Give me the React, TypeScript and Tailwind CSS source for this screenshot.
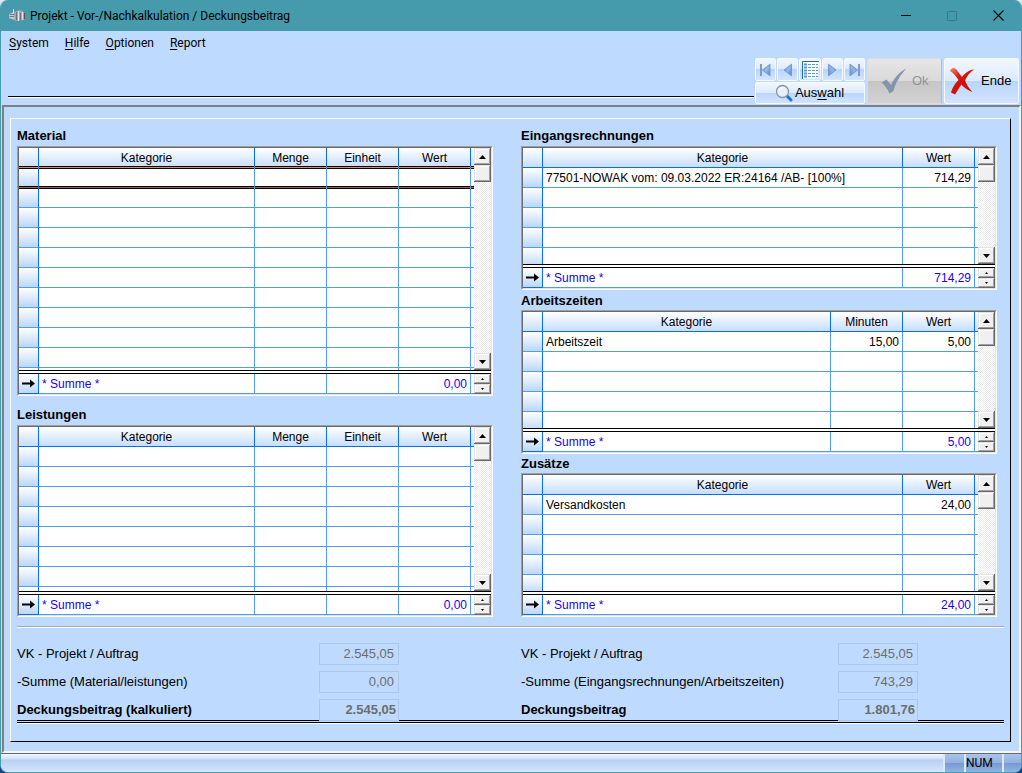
import React from "react";

type Column = { title: string; sum?: string };

type GridProps = {
  title: string;
  columns: Column[];
  rows: string[][];
  rowCount: number;
  bodyClass: string;
  headingClass: string;
  focused?: boolean;
};

const ARIAL = "font-['Liberation_Sans',Arial,sans-serif]";
const UI = "font-['Roboto','Segoe_UI',sans-serif]";

const BEVEL =
  "bg-[#f0f0f0] shadow-[inset_-1px_-1px_#696969,inset_1px_1px_#e3e3e3,inset_-2px_-2px_#a0a0a0,inset_2px_2px_#ffffff]";

const GLOSS =
  "rounded-xs border border-[#f4f9ff] bg-[linear-gradient(#f2f7ff_0%,#dbe9fe_50%,#b9d5fc_50%,#d2e4fe_100%)]";

function Arrow({ up, small }: { up?: boolean; small?: boolean }) {
  const w = small ? 3 : 7;
  const h = small ? 2 : 4;
  const mid = w / 2;
  return (
    <svg width={w} height={h} viewBox={`0 0 ${w} ${h}`} aria-hidden="true">
      <path d={up ? `M0 ${h}L${mid} 0L${w} ${h}Z` : `M0 0H${w}L${mid} ${h}Z`} fill="#000" />
    </svg>
  );
}

function ColGroup({ columns }: { columns: Column[] }) {
  return (
    <colgroup>
      <col className="w-5" />
      {columns.map((c, i) => (
        <col key={c.title} className={i === 0 ? "" : "w-[72px]"} />
      ))}
      <col className="w-[3px]" />
    </colgroup>
  );
}

function GridPanel({ title, columns, rows, rowCount, bodyClass, headingClass, focused }: GridProps) {
  const headFocus = focused
    ? "border-b-[#f08c14] shadow-[inset_0_-1px_#000000]"
    : "border-b-[#0a6cf0]";
  const rowLine = (r: number) => {
    if (focused && r === 0)
      return "border-b-[#a8621a] shadow-[inset_0_1px_#000000,inset_0_-1px_#000000]";
    if (focused && r === 1) return "border-b-[#4e9bf8] shadow-[inset_0_1px_#000000]";
    return "border-b-[#4e9bf8]";
  };
  return (
    <section>
      <h2 className={`text-[13px] leading-[18px] font-bold ${headingClass}`}>{title}</h2>
      <div className="border border-t-[#a0a0a0] border-r-white border-b-white border-l-[#a0a0a0]">
        <div className="border border-t-[#696969] border-r-[#e3e3e3] border-b-[#e3e3e3] border-l-[#696969] bg-white text-xs leading-4">
          <div className={`flex overflow-hidden ${bodyClass}`}>
            <div className="min-w-0 flex-1">
              <table className="w-full table-fixed border-separate border-spacing-0" aria-label={title}>
                <ColGroup columns={columns} />
                <thead>
                  <tr className="h-5 bg-linear-to-b from-white to-[#c4dcfc]">
                    <th className={`h-5 border-r border-b border-r-[#0a6cf0] p-0 ${headFocus}`} />
                    {columns.map((c) => (
                      <th
                        key={c.title}
                        scope="col"
                        className={`h-5 border-r border-b border-r-[#0a6cf0] p-0 text-center font-normal ${headFocus}`}
                      >
                        {c.title}
                      </th>
                    ))}
                    <th className={`h-5 border-b p-0 ${headFocus}`} />
                  </tr>
                </thead>
                <tbody>
                  {Array.from({ length: rowCount }, (_, r) => (
                    <tr key={r}>
                      <td
                        className={`h-5 border-r border-b border-r-[#0a6cf0] bg-linear-to-b from-white to-[#bcd7fb] p-0 ${rowLine(r)}`}
                      />
                      {columns.map((c, i) => (
                        <td
                          key={c.title}
                          className={`h-5 overflow-hidden border-r border-b border-r-[#4e9bf8] px-[3px] py-0 whitespace-nowrap ${
                            i === 0 ? "text-left" : "text-right"
                          } ${rowLine(r)}`}
                        >
                          {rows[r]?.[i] ?? ""}
                        </td>
                      ))}
                      <td className={`h-5 border-b p-0 ${rowLine(r)}`} />
                    </tr>
                  ))}
                </tbody>
              </table>
            </div>
            <div className="flex w-[17px] flex-col bg-[repeating-conic-gradient(#ffffff_0%_25%,#ebebeb_0%_50%)] bg-size-[2px_2px]">
              <button
                type="button"
                aria-label={`${title}: nach oben`}
                className={`flex h-[17px] items-center justify-center ${BEVEL}`}
              >
                <Arrow up />
              </button>
              <div className={`h-[17px] ${BEVEL}`} />
              <div className="flex-1" />
              <button
                type="button"
                aria-label={`${title}: nach unten`}
                className={`flex h-[17px] items-center justify-center ${BEVEL}`}
              >
                <Arrow />
              </button>
            </div>
          </div>
          <div className="h-1 border-y border-black bg-white" />
          <div className="flex">
            <div className="min-w-0 flex-1">
              <table className="w-full table-fixed border-separate border-spacing-0" aria-label={`${title} Summe`}>
                <ColGroup columns={columns} />
                <tbody>
                  <tr className="text-[#1c00f0]">
                    <td className="h-5 border-r border-b border-[#0a6cf0] bg-linear-to-b from-white to-[#bcd7fb] p-0">
                      <svg width="13" height="9" viewBox="0 0 13 9" className="mx-auto" aria-hidden="true">
                        <path d="M0 3.5H8V0.5L13 4.5L8 8.5V5.5H0Z" fill="#000" />
                      </svg>
                    </td>
                    {columns.map((c, i) => (
                      <td
                        key={c.title}
                        className={`h-5 border-r border-b border-[#4e9bf8] px-[3px] py-0 ${i === 0 ? "text-left" : "text-right"}`}
                      >
                        {i === 0 ? "* Summe *" : c.sum}
                      </td>
                    ))}
                    <td className="h-5 border-b border-[#4e9bf8] p-0" />
                  </tr>
                </tbody>
              </table>
            </div>
            <div className="flex w-[17px] flex-col">
              <button
                type="button"
                aria-label={`${title}: vorherige Summe`}
                className={`flex h-2.5 items-center justify-center ${BEVEL}`}
              >
                <Arrow up small />
              </button>
              <button
                type="button"
                aria-label={`${title}: nächste Summe`}
                className={`flex h-2.5 items-center justify-center ${BEVEL}`}
              >
                <Arrow small />
              </button>
            </div>
          </div>
        </div>
      </div>
    </section>
  );
}

function NavGlyph({ kind }: { kind: string }) {
  if (kind === "list") {
    return (
      <svg width="17" height="18" viewBox="0 0 17 18" aria-hidden="true">
        <rect x="0.5" y="0.5" width="16" height="17" fill="#fff" />
        <path d="M0.5 18V0.5H17" fill="none" stroke="#1c7396" />
        <rect x="2" y="2" width="3" height="15" fill="#a9c4f2" />
        <path d="M2 3.5H16M2 6.5H16M2 9.5H16M2 12.5H16M2 15.5H16" stroke="#5b98e4" strokeWidth="1" />
        <path d="M5.5 2V17M9.5 2V17M13.5 2V17" stroke="#fff" strokeWidth="1" />
      </svg>
    );
  }
  const right = kind === "next" || kind === "last";
  const bar = kind === "first" || kind === "last";
  return (
    <svg width="14" height="14" viewBox="0 0 14 14" className={right ? "-scale-x-100" : ""} aria-hidden="true">
      <defs>
        <linearGradient id={`nav-${kind}`} x1="0" y1="0" x2="1" y2="1">
          <stop offset="0" stopColor="#6a8cc4" />
          <stop offset="0.5" stopColor="#8db8f4" />
          <stop offset="1" stopColor="#5c86cc" />
        </linearGradient>
      </defs>
      {bar && <path d="M2 1V13" stroke="#8399bd" strokeWidth="2" />}
      <path
        d={bar ? "M3.5 7L11 1.2V12.8Z" : "M3 7L10.5 1.2V12.8Z"}
        fill={`url(#nav-${kind})`}
        stroke="#7c97c4"
        strokeWidth="1"
        strokeLinejoin="round"
      />
    </svg>
  );
}

const NAV = [
  { kind: "first", label: "Erster Datensatz" },
  { kind: "prev", label: "Vorheriger Datensatz" },
  { kind: "list", label: "Liste" },
  { kind: "next", label: "Nächster Datensatz" },
  { kind: "last", label: "Letzter Datensatz" },
];

function TitleBar() {
  return (
    <header className="flex h-[31px] items-center bg-[#459aab] pl-2">
      <svg width="17" height="13" viewBox="0 0 17 13" aria-hidden="true">
        <path d="M0 5L5 3L6 11L0 9Z" fill="#c9cdd2" />
        <path d="M5 3L11 1L15 3V11L6 12Z" fill="#a4a7ae" />
        <path d="M0.5 5.5H5M0.5 7.5H5" stroke="#747a86" />
        <path d="M4.5 0V4M9.5 2V12M13.5 3V11" stroke="#e2e5e8" />
        <path d="M7.5 3V11M11.5 4V11" stroke="#697080" />
        <path d="M15.5 4V10" stroke="#7b3f49" />
      </svg>
      <h1 className={`ml-1 flex-1 text-xs text-black ${UI}`}>Projekt - Vor-/Nachkalkulation / Deckungsbeitrag</h1>
      <button type="button" aria-label="Minimieren" className="flex h-full w-[46px] items-center justify-center">
        <svg width="10" height="10" viewBox="0 0 10 10" aria-hidden="true">
          <path d="M0 4.5H10" stroke="#000" />
        </svg>
      </button>
      <button type="button" aria-label="Maximieren" disabled className="flex h-full w-[46px] items-center justify-center">
        <svg width="10" height="10" viewBox="0 0 10 10" aria-hidden="true">
          <rect x="0.5" y="0.5" width="9" height="9" rx="1" fill="none" stroke="#36798a" />
        </svg>
      </button>
      <button type="button" aria-label="Schließen" className="flex h-full w-[46px] items-center justify-center">
        <svg width="11" height="11" viewBox="0 0 11 11" aria-hidden="true">
          <path d="M0.5 0.5L10.5 10.5M10.5 0.5L0.5 10.5" stroke="#000" strokeWidth="1.1" />
        </svg>
      </button>
    </header>
  );
}

function MenuBar() {
  const items = [
    ["S", "ystem"],
    ["H", "ilfe"],
    ["O", "ptionen"],
    ["R", "eport"],
  ];
  return (
    <nav className={`flex h-6 items-center gap-4 pl-2 text-xs ${UI}`}>
      {items.map(([key, rest]) => (
        <button type="button" key={key}>
          <span className="underline underline-offset-2">{key}</span>
          {rest}
        </button>
      ))}
    </nav>
  );
}

function Toolbar() {
  return (
    <div className="flex h-[50px] gap-0.5 pt-[3px] pr-0.5 pb-px pl-[7px]">
      <div className="-mr-0.5 h-10 flex-1 border-b border-white">
        <div className="h-[39px] border-b border-black" />
      </div>
      <div className="ml-px flex w-[110px] flex-col gap-px">
        <div className="flex gap-px">
          {NAV.map((n) => (
            <button
              type="button"
              key={n.kind}
              aria-label={n.label}
              className={`flex h-[23px] flex-1 items-center justify-center ${GLOSS}`}
            >
              <NavGlyph kind={n.kind} />
            </button>
          ))}
        </div>
        <button
          type="button"
          className={`flex h-[22px] items-center justify-center gap-0.5 pr-px text-[13px] leading-4 ${GLOSS}`}
        >
          <svg width="18" height="18" viewBox="0 0 18 18" aria-hidden="true">
            <path d="M12 12L16 16" stroke="#1d6fe8" strokeWidth="3" strokeLinecap="round" />
            <circle cx="7.5" cy="7.5" r="6" fill="#e6f1fd" stroke="#8a93a2" strokeWidth="1.3" />
            <path d="M4 7A3.6 3.6 0 0 1 8 3.8" fill="none" stroke="#fff" strokeWidth="1.4" />
          </svg>
          <span>
            Aus<span className="underline underline-offset-2">w</span>ahl
          </span>
        </button>
      </div>
      <button
        type="button"
        disabled
        className="flex w-[75px] items-center gap-1 rounded-xs border border-[#dcdcdc] border-r-[#bdbdbd] bg-[linear-gradient(#e6e6e6_0%,#dadada_50%,#c6c6c6_50%,#d2d2d2_100%)] pl-3 text-[13px] text-[#8f9399]"
      >
        <svg width="28" height="28" viewBox="0 0 28 28" aria-hidden="true">
          <path
            d="M1.5 15.5L6.5 12.5L11 18C14 11.5 18.5 5.5 26.5 1.5C20 8 15.5 16 13.5 24L9.5 26.5C7.5 22 5 18.5 1.5 15.5Z"
            fill="#8494aa"
          />
        </svg>
        Ok
      </button>
      <button type="button" className={`flex w-[75px] items-center gap-1.5 pl-1 text-[13px] ${GLOSS}`}>
        <svg width="26" height="28" viewBox="0 0 26 28" aria-hidden="true">
          <defs>
            <linearGradient id="cross" x1="0" y1="0" x2="0.6" y2="1">
              <stop offset="0" stopColor="#f0897d" />
              <stop offset="0.4" stopColor="#d81608" />
              <stop offset="1" stopColor="#c80c04" />
            </linearGradient>
          </defs>
          <path
            d="M1 4C2 1 5 0 7 2L13 10C16 6 20 3 25 2.5C21 5 18 9 16 13.5C18 18 20 21.5 23.5 25C18.5 23.5 15 20.5 12.5 17.5C10 21 8 24.5 6 27.5L2 25.5C3 21 6 16.5 9.5 13C7 9 4.5 6 1 4Z"
            fill="url(#cross)"
          />
        </svg>
        Ende
      </button>
    </div>
  );
}

type Total = { label: string; value: string };

const TOTALS: [Total, Total][] = [
  [
    { label: "VK - Projekt / Auftrag", value: "2.545,05" },
    { label: "VK - Projekt / Auftrag", value: "2.545,05" },
  ],
  [
    { label: "-Summe (Material/leistungen)", value: "0,00" },
    { label: "-Summe (Eingangsrechnungen/Arbeitszeiten)", value: "743,29" },
  ],
  [
    { label: "Deckungsbeitrag (kalkuliert)", value: "2.545,05" },
    { label: "Deckungsbeitrag", value: "1.801,76" },
  ],
];

function Totals() {
  return (
    <div className="mt-[9px] border-t border-[#a8a8a8]">
      <div className="border-t border-white pt-[15px] text-[13px] leading-4">
        <div className="grid grid-cols-[302fr_80px_122fr_317fr_80px_86fr] gap-y-1.5">
          {TOTALS.map((pair, r) => {
            const last = r === TOTALS.length - 1;
            const line = last ? "border-b border-black" : "";
            return pair.map((t, c) => (
              <React.Fragment key={`${r}-${c}`}>
                <label
                  htmlFor={`total-${r}-${c}`}
                  className={`flex items-center whitespace-nowrap ${last ? "font-bold" : ""} ${line}`}
                >
                  {t.label}
                </label>
                <input
                  id={`total-${r}-${c}`}
                  type="text"
                  disabled
                  value={t.value}
                  className={`h-[22px] w-20 border border-[#aec6e8] bg-transparent pb-0.5 text-right text-[#6d6d6d] ${
                    last ? "pr-0.5 font-bold" : "pr-1"
                  }`}
                />
                <span className={line} />
              </React.Fragment>
            ));
          })}
        </div>
        <div className="mt-px h-0.5 border-t border-b border-t-black border-b-white" />
      </div>
    </div>
  );
}

function StatusBar() {
  const cell =
    "border-l-2 border-[#dce9fa] bg-[linear-gradient(#a9c5ec_0%,#8fb0e0_50%,#7699d2_50%,#8fb3e4_100%)]";
  return (
    <footer className={`flex h-[19px] border-t border-[#696969] text-xs leading-[18px] ${UI}`}>
      <div className="flex-1 bg-[linear-gradient(#f0f6ff_0%,#d0e2fa_28%,#b5d0f5_32%,#d6e6fc_100%)]" />
      <div className={`w-[21px] ${cell}`} />
      <div className={`w-[38px] ${cell}`}>NUM</div>
      <div className={`w-[19px] ${cell}`} />
    </footer>
  );
}

export default function App() {
  return (
    <div className="bg-linear-to-b from-[#dfe9ee] to-[#1c3f8c]">
      <div
        className={`flex min-h-screen flex-col overflow-hidden rounded-lg border-x border-b border-[#459aab] bg-[#bedaff] text-black ${ARIAL}`}
      >
        <TitleBar />
        <MenuBar />
        <Toolbar />
        <main className="ml-px flex flex-1 flex-col border-2 border-t-[#808080] border-r-[#f4f4f4] border-b-[#f4f4f4] border-l-[#808080] pt-[11px] pr-2 pb-[9px] pl-1.5">
          <div className="flex-1 border border-t-white border-r-black border-b-black border-l-white px-1.5 pt-2 pb-[17px]">
            <div className="grid grid-cols-2 gap-7 pr-[7px]">
              <div>
                <GridPanel
                  title="Material"
                  columns={[
                    { title: "Kategorie" },
                    { title: "Menge" },
                    { title: "Einheit" },
                    { title: "Wert", sum: "0,00" },
                  ]}
                  rows={[]}
                  rowCount={11}
                  bodyClass="h-[222px]"
                  headingClass="mb-px"
                  focused
                />
                <GridPanel
                  title="Leistungen"
                  columns={[
                    { title: "Kategorie" },
                    { title: "Menge" },
                    { title: "Einheit" },
                    { title: "Wert", sum: "0,00" },
                  ]}
                  rows={[]}
                  rowCount={8}
                  bodyClass="h-[164px]"
                  headingClass="mt-2.5 mb-px"
                />
              </div>
              <div>
                <GridPanel
                  title="Eingangsrechnungen"
                  columns={[{ title: "Kategorie" }, { title: "Wert", sum: "714,29" }]}
                  rows={[["77501-NOWAK vom: 09.03.2022 ER:24164 /AB- [100%]", "714,29"]]}
                  rowCount={5}
                  bodyClass="h-[116px]"
                  headingClass="mb-px"
                />
                <GridPanel
                  title="Arbeitszeiten"
                  columns={[{ title: "Kategorie" }, { title: "Minuten" }, { title: "Wert", sum: "5,00" }]}
                  rows={[["Arbeitszeit", "15,00", "5,00"]]}
                  rowCount={5}
                  bodyClass="h-[116px]"
                  headingClass="mt-0.5"
                />
                <GridPanel
                  title="Zusätze"
                  columns={[{ title: "Kategorie" }, { title: "Wert", sum: "24,00" }]}
                  rows={[["Versandkosten", "24,00"]]}
                  rowCount={5}
                  bodyClass="h-[116px]"
                  headingClass="mt-px"
                />
              </div>
            </div>
            <Totals />
          </div>
        </main>
        <StatusBar />
      </div>
    </div>
  );
}
